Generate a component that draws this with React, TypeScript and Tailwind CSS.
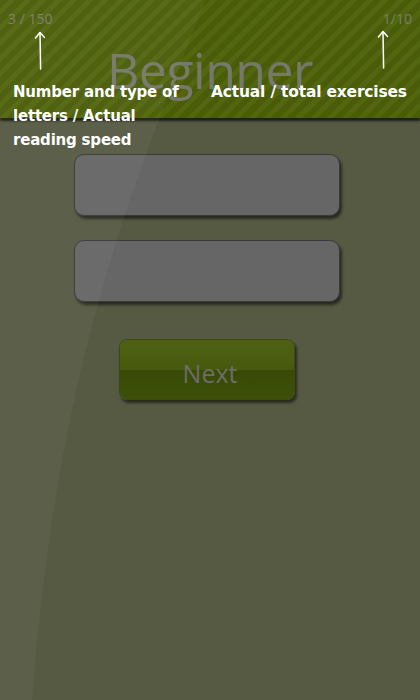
import React from 'react';

const Arrow = () => (
  <svg width="12" height="40" viewBox="0 0 12 40" className="block">
    <path d="M6 2 L6.6 38" stroke="#ffffff" strokeWidth="1.5" fill="none" strokeLinecap="round" />
    <path d="M1.5 7 L6 1.5 L10.5 6.5" stroke="#ffffff" strokeWidth="1.5" fill="none" strokeLinecap="round" strokeLinejoin="round" />
  </svg>
);

const Field = () => (
  <div className="w-[266px] h-[62px] rounded-[10px] bg-[#666666] border border-[#3a3a3a] shadow-[2px_3px_3px_rgba(0,0,0,0.55)]" />
);

const note = "absolute text-white leading-[24px] font-semibold whitespace-nowrap font-['DejaVu_Sans',sans-serif]";

export default function App() {
  return (
    <div className="relative w-[420px] h-[700px] overflow-hidden bg-[#575a43] font-['Open_Sans',sans-serif]">
      {/* header */}
      <div className="relative h-[118px] bg-[repeating-linear-gradient(135deg,#4a5c0a_0px,#4a5c0a_6px,#52660f_6px,#52660f_11px)] shadow-[0_3px_2px_rgba(20,22,12,0.85)]">
        <div className="flex justify-between px-2 pt-[8px] text-[14px] text-[#7b7e6c]">
          <span>3 / 150</span>
          <span>1/10</span>
        </div>
        <div className="flex justify-center -mt-[4px] text-[50px] leading-none text-[#75786a] tracking-[-0.5px]">
          <span className="mt-[20px]">Beginner</span>
        </div>
      </div>

      {/* fields */}
      <div className="flex flex-col items-center pt-[36px] gap-[24px] pr-[6px]">
        <Field />
        <Field />
        <div className="mt-[13px] w-[176px] h-[61px] rounded-[8px] overflow-hidden border border-[#3c4a10] shadow-[2px_3px_3px_rgba(0,0,0,0.55)] flex flex-col relative">
          <div className="h-1/2 bg-[linear-gradient(#4f6013,#465a0d)]" />
          <div className="h-1/2 bg-[linear-gradient(#384a05,#3d5009)]" />
          <span className="absolute inset-0 flex items-center justify-center text-[25px] text-[#6c6d66] pt-[9px] pl-[6px]">Next</span>
        </div>
      </div>

      {/* gloss */}
      <svg className="absolute inset-0 pointer-events-none" width="420" height="700" viewBox="0 0 420 700">
        <path d="M0 0 L205 0 C150 150 60 330 32 700 L0 700 Z" fill="#ffffff" fillOpacity="0.035" />
      </svg>

      {/* annotations */}
      <div className="absolute left-[34px] top-[31px]"><Arrow /></div>
      <div className="absolute left-[377px] top-[30px]"><Arrow /></div>
      <div className={`${note} left-[13px] top-[80px] text-[15px] tracking-[-0.2px]`}>
        Number and type of<br />letters / Actual<br />reading speed
      </div>
      <div className={`${note} left-[211px] top-[80px] text-[15.5px] tracking-[-0.2px]`}>
        Actual / total exercises
      </div>
    </div>
  );
}
